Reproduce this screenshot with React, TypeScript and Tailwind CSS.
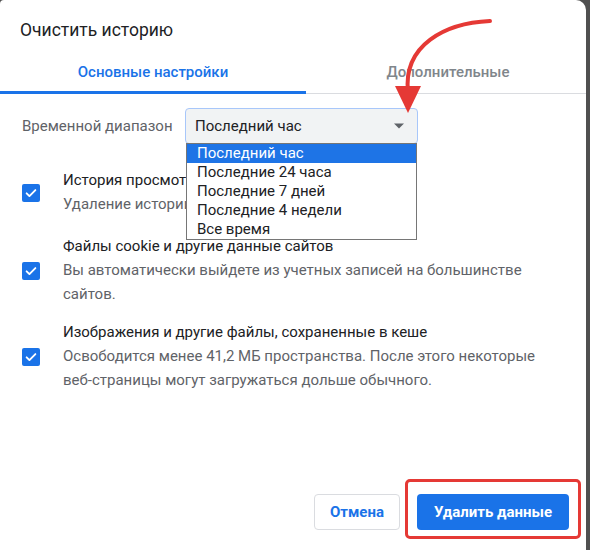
import React from "react";

const font = { fontFamily: "Roboto, 'Noto Sans', Arial, sans-serif" };

const Check = () => (
  <div className="w-[18px] h-[18px] rounded-[2px] bg-[#1a73e8] flex items-center justify-center shrink-0">
    <svg width="14" height="14" viewBox="0 0 24 24" fill="none">
      <path d="M4.5 12.5l4.8 4.8L19.5 7" stroke="white" strokeWidth="3.2" strokeLinecap="round" strokeLinejoin="round" />
    </svg>
  </div>
);

const options = ["Последний час", "Последние 24 часа", "Последние 7 дней", "Последние 4 недели", "Все время"];

const Item = ({ title, lines, className = "" }: { title: string; lines: string[]; className?: string }) => (
  <div className={"flex " + className}>
    <div className="w-[63px] pl-[22px] flex items-center">
      <Check />
    </div>
    <div className="flex flex-col">
      <div className="text-[15px] leading-[23px] text-[#202124]">{title}</div>
      {lines.map((l) => (
        <div key={l} className="text-[15px] leading-[24px] text-[#5f6368]">{l}</div>
      ))}
    </div>
  </div>
);

export default function App() {
  return (
    <div className="w-[590px] h-[550px] bg-[#505050] overflow-hidden" style={font}>
      <div className="relative w-[586px] h-[550px] bg-white rounded-tr-[10px] rounded-tl-[4px] flex flex-col">
        <div className="pl-[20px] pt-[19px] text-[17.5px] leading-[22px] text-[#202124]">Очистить историю</div>

        <div className="mt-[19px] flex h-[34px] border-b border-[#dadce0]">
          <div className="w-[306px] flex items-start justify-center border-b-[3px] border-[#1a73e8] -mb-[1px]">
            <span className="text-[15px] font-medium text-[#1a73e8] mt-[1px]">Основные настройки</span>
          </div>
          <div className="flex-1 flex items-start justify-center">
            <span className="text-[15px] font-medium text-[#80868b] mt-[1px] ml-[4px]">Дополнительные</span>
          </div>
        </div>

        <div className="mt-[14px] flex items-center">
          <div className="pl-[22px] w-[185px] text-[15px] text-[#5f6368]">Временной диапазон</div>
          <div className="relative w-[233px] h-[36px] bg-[#f1f3f4] border border-[#a8c7fa] rounded-[4px] flex items-center pl-[9px] pr-[12px]">
            <span className="text-[15px] text-[#202124]">Последний час</span>
            <svg className="ml-auto" width="12" height="8" viewBox="0 0 12 8">
              <path d="M1 1.5h10L6 6.5z" fill="#5f6368" />
            </svg>
            <div className="absolute left-0 top-[34px] w-[231px] bg-white border border-[#767676] z-10 flex flex-col">
              {options.map((o, i) => (
                <div
                  key={o}
                  className={
                    "h-[19px] leading-[19px] pl-[10px] text-[15px] " +
                    (i === 0 ? "bg-[#1e74e6] text-white" : "text-[#202124]")
                  }
                >
                  {o}
                </div>
              ))}
            </div>
          </div>
        </div>

        <div className="mt-[25px] flex flex-col gap-[17px]">
          <Item title="История просмотров" lines={["Удаление истории со всех устройств"]} />
          <Item
            className="mt-[2px]"
            title="Файлы cookie и другие данные сайтов"
            lines={["Вы автоматически выйдете из учетных записей на большинстве", "сайтов."]}
          />
          <Item
            className="-mt-[2px]"
            title="Изображения и другие файлы, сохраненные в кеше"
            lines={["Освободится менее 41,2 МБ пространства. После этого некоторые", "веб-страницы могут загружаться дольше обычного."]}
          />
        </div>

        <div className="mt-auto mb-[20px] flex justify-end pr-[17px] gap-[17px]">
          <button className="w-[86px] h-[36px] rounded-[4px] border border-[#dadce0] bg-white text-[15px] font-bold text-[#1a73e8]">
            Отмена
          </button>
          <div className="relative">
            <button className="w-[152px] h-[36px] rounded-[4px] bg-[#1a73e8] text-[15px] font-bold text-white">
              Удалить данные
            </button>
            <div className="absolute -left-[12px] -top-[15px] w-[176px] h-[60px] border-[3px] border-[#e53935] rounded-[5px]" />
          </div>
        </div>

        <svg className="absolute left-0 top-0 pointer-events-none" width="586" height="550">
          <path d="M490 21 C445 23 403 45 408 92" stroke="#e53935" strokeWidth="4" fill="none" strokeLinecap="round" />
          <path d="M395 86 L421 86 L408 113 Z" fill="#e53935" />
        </svg>
      </div>
    </div>
  );
}
